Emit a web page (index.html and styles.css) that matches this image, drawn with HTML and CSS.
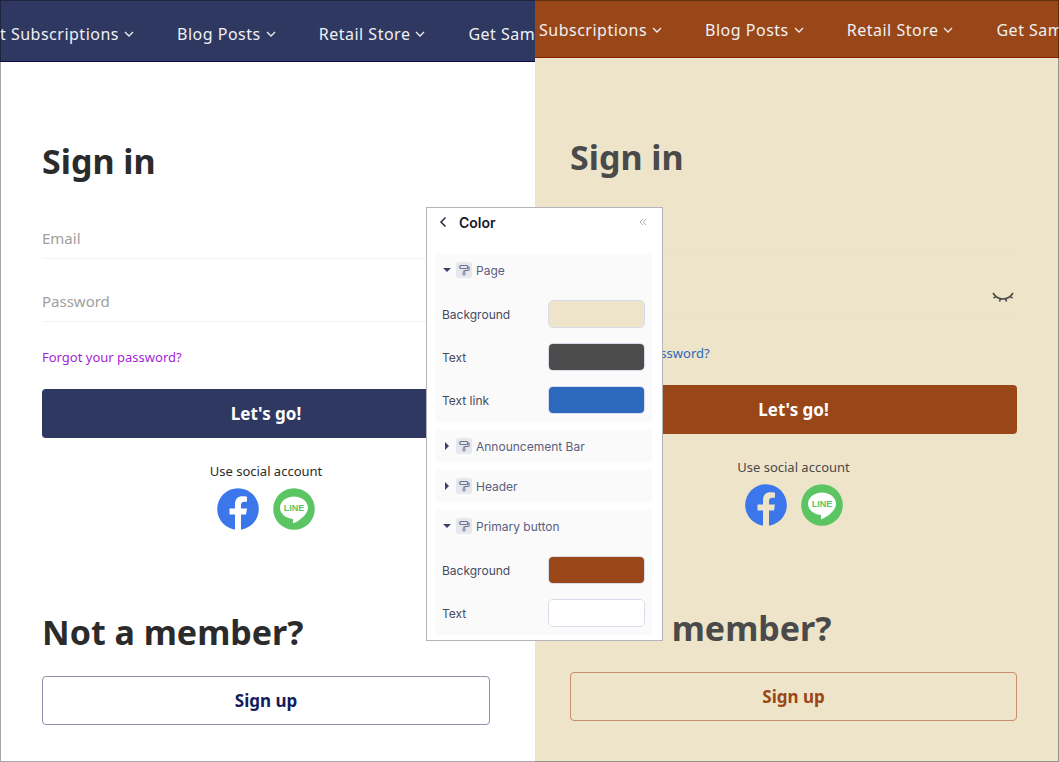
FILE: index.html
```html
<!DOCTYPE html>
<html lang="en">
<head>
    <meta charset="UTF-8">
    <meta name="viewport" content="width=device-width, initial-scale=1.0">
    <title>Sign in</title>
    <link rel="stylesheet" href="styles.css">
</head>
<body>
    <!-- Shared icons -->
    <svg class="sprite" aria-hidden="true">
        <symbol id="chevron" viewBox="0 0 10 6">
            <path d="M1 1l4 4 4-4" fill="none" stroke="currentColor" stroke-width="1.3"/>
        </symbol>
        <symbol id="facebook" viewBox="0 0 42 42">
            <circle cx="21" cy="21" r="20.8" fill="#3b76ea"/>
            <path d="M18 42V26.5h-5.5v-6H18v-4.4c0-5.2 3-7.8 7.6-7.8 2.2 0 4.4.4 4.4.4v5h-2.6c-2.6 0-3.4 1.5-3.4 3.2v3.6h6l-1 6h-5V42z" fill="var(--page-bg)"/>
        </symbol>
        <symbol id="line" viewBox="0 0 42 42">
            <circle cx="21" cy="21" r="20.8" fill="#5bc463"/>
            <path d="M21 8.4c-7.8 0-14 5-14 11.3 0 5.6 5 10.3 11.8 11.1 1.6.3 1.5.9 1.1 3.6-.1.9.5 1 1.1.7C23.5 34 35 27.800 35 19.700c0-6.300-6.200-11.300-14-11.300z" fill="#fff"/>
            <text x="21" y="23" text-anchor="middle" class="line-word">LINE</text>
        </symbol>
        <symbol id="eye-closed" viewBox="0 0 22 12">
            <path d="M1 2c5 8 15 8 20 0M4 5.500L1.500 7M8.500 7.500L7.500 10.500M13.500 7.500l1 3M18 5.500L20.500 7" fill="none" stroke="currentColor" stroke-width="1.6"/>
        </symbol>
        <symbol id="roller" viewBox="0 0 12 12">
            <rect x="2" y="1.500" width="7.500" height="3" rx=".8" fill="none" stroke="currentColor" stroke-width="1.2"/>
            <path d="M2 3H.8M9.500 3H11v3L6 6.800V8" fill="none" stroke="currentColor" stroke-width="1.2" stroke-linejoin="round"/>
            <rect x="5" y="8" width="2" height="3" rx=".8" fill="none" stroke="currentColor"/>
        </symbol>
    </svg>

    <div class="compare">
        <div class="store store-default">
            <nav class="nav">
                <a href="#">t Subscriptions<svg class="chevron"><use href="#chevron"/></svg></a>
                <a href="#">Blog Posts<svg class="chevron"><use href="#chevron"/></svg></a>
                <a href="#">Retail Store<svg class="chevron"><use href="#chevron"/></svg></a>
                <a href="#">Get Sam</a>
            </nav>
            <main class="content">
                <h1>Sign in</h1>
                <form>
                    <div class="field">
                        <input type="email" placeholder="Email" aria-label="Email">
                    </div>
                    <div class="field">
                        <input type="password" placeholder="Password" aria-label="Password">
                        <button type="button" class="eye" aria-label="Show password"><svg><use href="#eye-closed"/></svg></button>
                    </div>
                    <a class="forgot" href="#">Forgot your password?</a>
                    <button type="submit" class="btn btn-primary">Let's go!</button>
                </form>
                <p class="social-title">Use social account</p>
                <div class="social">
                    <a href="#" aria-label="Facebook"><svg><use href="#facebook"/></svg></a>
                    <a href="#" aria-label="LINE"><svg><use href="#line"/></svg></a>
                </div>
                <h2>Not a member?</h2>
                <button type="button" class="btn btn-outline">Sign up</button>
            </main>
        </div>

        <div class="store store-custom">
            <nav class="nav">
                <a href="#">Subscriptions<svg class="chevron"><use href="#chevron"/></svg></a>
                <a href="#">Blog Posts<svg class="chevron"><use href="#chevron"/></svg></a>
                <a href="#">Retail Store<svg class="chevron"><use href="#chevron"/></svg></a>
                <a href="#">Get Sam</a>
            </nav>
            <main class="content">
                <h1>Sign in</h1>
                <form>
                    <div class="field">
                        <input type="email" placeholder="Email" aria-label="Email">
                    </div>
                    <div class="field">
                        <input type="password" placeholder="Password" aria-label="Password">
                        <button type="button" class="eye" aria-label="Show password"><svg><use href="#eye-closed"/></svg></button>
                    </div>
                    <a class="forgot" href="#">Forgot your password?</a>
                    <button type="submit" class="btn btn-primary">Let's go!</button>
                </form>
                <p class="social-title">Use social account</p>
                <div class="social">
                    <a href="#" aria-label="Facebook"><svg><use href="#facebook"/></svg></a>
                    <a href="#" aria-label="LINE"><svg><use href="#line"/></svg></a>
                </div>
                <h2>Not a member?</h2>
                <button type="button" class="btn btn-outline">Sign up</button>
            </main>
        </div>
    </div>

    <!-- Theme color settings -->
    <aside class="panel">
        <div class="panel-header">
            <button type="button" class="back" aria-label="Back"><svg viewBox="0 0 8 12"><path d="M6.500 1.500L2 6l4.500 4.500" fill="none" stroke="currentColor" stroke-width="1.4"/></svg></button>
            <h3>Color</h3>
            <button type="button" class="collapse" aria-label="Collapse"><svg viewBox="0 0 8 8"><path d="M4 .8L1 4l3 3.200M7.300.8l-3 3.200 3 3.200" fill="none" stroke="currentColor"/></svg></button>
        </div>

        <div class="section">
            <button type="button" class="section-toggle" aria-expanded="true"><span class="caret"></span><span class="icon"><svg><use href="#roller"/></svg></span>Page</button>
            <div class="rows">
                <div class="row"><label for="pageBg">Background</label><input type="color" id="pageBg" value="#eee4c9"></div>
                <div class="row"><label for="pageText">Text</label><input type="color" id="pageText" value="#4c4c4c"></div>
                <div class="row"><label for="pageLink">Text link</label><input type="color" id="pageLink" value="#2c68bb"></div>
            </div>
        </div>
        <div class="section">
            <button type="button" class="section-toggle" aria-expanded="false"><span class="caret"></span><span class="icon"><svg><use href="#roller"/></svg></span>Announcement Bar</button>
        </div>
        <div class="section">
            <button type="button" class="section-toggle" aria-expanded="false"><span class="caret"></span><span class="icon"><svg><use href="#roller"/></svg></span>Header</button>
        </div>
        <div class="section">
            <button type="button" class="section-toggle" aria-expanded="true"><span class="caret"></span><span class="icon"><svg><use href="#roller"/></svg></span>Primary button</button>
            <div class="rows">
                <div class="row"><label for="buttonBg">Background</label><input type="color" id="buttonBg" value="#994719"></div>
                <div class="row"><label for="buttonText">Text</label><input type="color" id="buttonText" value="#ffffff"></div>
            </div>
        </div>
    </aside>
</body>
</html>
```

FILE: styles.css
```css
* {
    margin: 0;
    padding: 0;
    box-sizing: border-box;
}

body {
    min-height: 100vh;
    font-family: "Noto Sans", sans-serif;
}

button,
input {
    font: inherit;
    color: inherit;
    background: none;
    border: none;
}

button {
    cursor: pointer;
}

a {
    text-decoration: none;
}

svg {
    display: block;
}

.sprite {
    position: absolute;
    width: 0;
    height: 0;
}

.compare {
    position: relative;
    display: grid;
    grid-template-columns: 535fr 524fr;
    min-height: 100vh;
}

/* Translucent frame over both storefronts */
.compare::after {
    content: "";
    position: absolute;
    inset: 0;
    border: 1px solid rgba(0, 0, 0, 0.35);
    pointer-events: none;
}

/* Storefronts */
.store {
    min-width: 0;
    background: var(--page-bg);
    color: var(--text);
}

.store-default {
    --page-bg: #ffffff;
    --text: #2b2b2b;
    --link: #a51fd6;
    --primary: #2f3861;
    --sign-up: #141d5c;
    --outline: #8d92ab;
    --rule: #f2f2f2;
    --nav-edge: #0b0b4a;
}

.store-custom {
    --page-bg: #eee4c9;
    --text: #4a4a4a;
    --link: #2c68bb;
    --primary: #994719;
    --sign-up: #994719;
    --outline: #c98e6c;
    --rule: #eae1c9;
    --nav-edge: #8c2108;
}

.nav {
    display: flex;
    align-items: center;
    gap: 43px;
    height: 62px;
    padding-top: 6px;
    overflow: hidden;
    background: var(--primary);
    border-bottom: 1px solid var(--nav-edge);
}

.store-custom .nav {
    height: 58px;
    padding: 3px 0 0 4px;
}

.nav a {
    display: flex;
    align-items: center;
    gap: 5px;
    color: #f0f0f3;
    font-size: 16px;
    letter-spacing: 0.5px;
    white-space: nowrap;
}

.chevron {
    width: 10px;
    height: 6px;
}

.content {
    padding: 75px 45px 35px 42px;
}

.store-custom .content {
    padding: 75px 42px 35px 35px;
}

h1,
h2 {
    font-size: 34px;
    line-height: 48px;
    font-weight: 700;
}

form {
    margin-top: 25px;
}

.field {
    display: flex;
    align-items: center;
    height: 49px;
    margin-bottom: 14px;
    padding-top: 7px;
    border-bottom: 1px solid var(--rule);
}

.field input {
    flex: 1;
    min-width: 0;
    height: 32px;
    font-size: 15px;
    outline: none;
}

.field input::placeholder {
    color: #a0a0a0;
}

.eye {
    padding: 0 3px;
    color: #4a4a4a;
}

.eye svg {
    width: 22px;
    height: 12px;
}

.forgot {
    display: block;
    margin-top: 25px;
    font-size: 13px;
    line-height: 20px;
    color: var(--link);
}

.btn {
    display: block;
    width: 100%;
    height: 49px;
    border-radius: 4px;
    font-size: 17px;
    font-weight: 700;
}

.btn-primary {
    margin-top: 22px;
    background: var(--primary);
    color: #fff;
}

.btn-outline {
    margin-top: 20px;
    border: 1px solid var(--outline);
    color: var(--sign-up);
}

.social-title {
    margin-top: 23px;
    font-size: 13px;
    line-height: 20px;
    text-align: center;
}

.social {
    display: flex;
    justify-content: center;
    gap: 14px;
    margin-top: 7px;
}

.social svg {
    width: 42px;
    height: 42px;
}

.line-word {
    font: 700 9px "Liberation Sans", sans-serif;
    fill: #5bc463;
}

h2 {
    margin-top: 78px;
}

/* Color panel */
.panel {
    position: absolute;
    top: 207px;
    left: 426px;
    width: 237px;
    padding: 0 10px 5px 8px;
    background: #fff;
    border: 1px solid #b4b4ba;
    font-family: Inter, sans-serif;
}

.panel-header {
    display: flex;
    align-items: center;
    height: 28px;
    margin-bottom: 18px;
    padding: 0 5px 0 4px;
    color: #17192e;
}

.panel-header h3 {
    flex: 1;
    margin-left: 12px;
    font-size: 14px;
    font-weight: 600;
}

.back svg {
    width: 8px;
    height: 12px;
}

.collapse {
    color: #a9abb9;
}

.collapse svg {
    width: 8px;
    height: 8px;
}

.section {
    margin-bottom: 8px;
    background: #fafafa;
    border-radius: 3px;
}

.section:last-child {
    margin-bottom: 0;
}

.section-toggle {
    display: flex;
    align-items: center;
    width: 100%;
    height: 32px;
    padding-left: 8px;
    font-size: 12px;
    color: #5b6080;
}

.caret {
    width: 8px;
    height: 4px;
    background: #3c4366;
    clip-path: polygon(0 0, 100% 0, 50% 100%);
}

.section-toggle[aria-expanded="false"] .caret {
    width: 4px;
    height: 8px;
    margin: 0 2px;
    clip-path: polygon(0 0, 100% 50%, 0 100%);
}

.icon {
    margin: 0 4px 0 5px;
    padding: 2px;
    border-radius: 3px;
    background: #e6e8ef;
    color: #70758f;
}

.icon svg {
    width: 12px;
    height: 12px;
}

.rows {
    display: grid;
    gap: 15px;
    padding: 14px 7px 8px;
}

.row {
    display: flex;
    align-items: center;
    justify-content: space-between;
    height: 28px;
    font-size: 12px;
    color: #454b60;
}

.row input {
    width: 97px;
    height: 28px;
    border: 1px solid #d9dce8;
    border-radius: 5px;
    overflow: hidden;
}

.row input::-webkit-color-swatch-wrapper {
    padding: 0;
}

.row input::-webkit-color-swatch {
    border: none;
}
```
